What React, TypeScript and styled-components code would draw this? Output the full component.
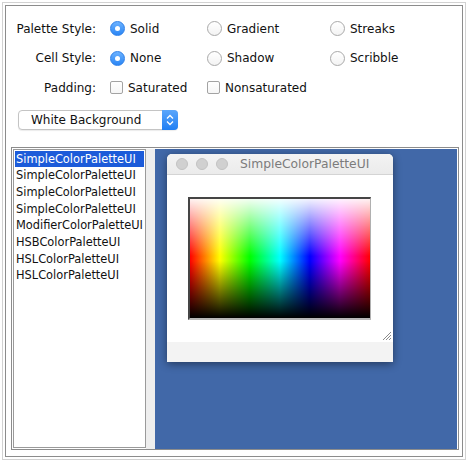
import React from "react";
import styled, { createGlobalStyle } from "styled-components";

const Global = createGlobalStyle`
  html, body { margin: 0; padding: 0; background: #ffffff; }
  body { font-family: "DejaVu Sans", sans-serif; color: #111; }
  * { box-sizing: border-box; }
`;

const Outer = styled.div`
  margin: 2px;
  width: 464px;
  height: 458px;
  border: 1px solid #d2d2d2;
  padding: 2px;
`;

const Inner = styled.div`
  height: 100%;
  border: 1px solid #8c8c8c;
  display: flex;
  flex-direction: column;
  padding: 8px 3px 6px 0;
`;

const Form = styled.div`
  display: grid;
  grid-template-columns: 91px 84px 110px auto;
  grid-auto-rows: 29.5px;
  column-gap: 13px;
  align-items: center;
  font-size: 12px;
`;

const Label = styled.div`
  text-align: right;
  padding-right: 1px;
`;

const Option = styled.label`
  display: flex;
  align-items: center;
  gap: 5px;
  white-space: nowrap;
`;

const Radio = styled.span<{ $on?: boolean }>`
  width: 15px;
  height: 15px;
  border-radius: 50%;
  flex: none;
  display: flex;
  align-items: center;
  justify-content: center;
  border: 1px solid ${(p) => (p.$on ? "#2d7fe8" : "#a9a9a9")};
  background: ${(p) =>
    p.$on
      ? "linear-gradient(#6cb2ff, #2a86f5)"
      : "linear-gradient(#ffffff, #f3f3f3)"};
  &::after {
    content: "";
    display: ${(p) => (p.$on ? "block" : "none")};
    width: 5px;
    height: 5px;
    border-radius: 50%;
    background: #ffffff;
  }
`;

const Check = styled.span`
  width: 13px;
  height: 13px;
  flex: none;
  border: 1px solid #a3a3a3;
  border-radius: 2px;
  background: linear-gradient(#ffffff, #f6f6f6);
`;

const Combo = styled.div`
  margin: 7px 0 0 12px;
  width: 160px;
  height: 20px;
  display: flex;
  border: 1px solid #c4c4c4;
  border-radius: 4px;
  box-shadow: 0 1px 1px rgba(0, 0, 0, 0.08);
  background: #ffffff;
  font-size: 12px;
`;

const ComboText = styled.div`
  flex: 1;
  padding-left: 12px;
  display: flex;
  align-items: center;
`;

const ComboButton = styled.div`
  width: 16px;
  margin: -1px -1px -1px 0;
  border-radius: 0 4px 4px 0;
  background: linear-gradient(#5ba6fb, #1f7ef3);
  display: flex;
  align-items: center;
  justify-content: center;
`;

const Split = styled.div`
  margin: 17px 0 0 5px;
  flex: 1;
  border: 1px solid #8c8c8c;
  padding: 1px 1px 0 1px;
  display: flex;
`;

const List = styled.div`
  width: 133px;
  margin-bottom: 1px;
  border: 1px solid #9a9a9a;
  background: #ffffff;
  padding: 1px;
  font-size: 11.4px;
`;

const Item = styled.div<{ $sel?: boolean }>`
  height: 16.7px;
  line-height: 16.7px;
  padding-left: 1px;
  white-space: nowrap;
  background: ${(p) => (p.$sel ? "#1c5bd9" : "transparent")};
  color: ${(p) => (p.$sel ? "#ffffff" : "#111111")};
`;

const Divider = styled.div`
  width: 9px;
  background: #eeeeee;
`;

const Desktop = styled.div`
  flex: 1;
  position: relative;
  background: #4168a8;
`;

const Window = styled.div`
  position: absolute;
  left: 12px;
  top: 5px;
  width: 226px;
  height: 208px;
  display: flex;
  flex-direction: column;
  background: #ffffff;
  border-radius: 5px 5px 0 0;
  box-shadow: 0 2px 9px rgba(0, 0, 0, 0.45);
  overflow: hidden;
`;

const TitleBar = styled.div`
  height: 21px;
  flex: none;
  display: flex;
  align-items: center;
  padding-left: 9px;
  background: linear-gradient(#f3f3f3, #ebebeb);
  border-bottom: 1px solid #d4d4d4;
`;

const Light = styled.span`
  width: 12px;
  height: 12px;
  border-radius: 50%;
  background: #d0d0d0;
  border: 1px solid #c2c2c2;
  margin-right: 8px;
  flex: none;
`;

const Title = styled.span`
  margin-left: 4px;
  font-size: 12.3px;
  color: #7c7c7c;
  white-space: nowrap;
`;

const Body = styled.div`
  flex: 1;
  position: relative;
  padding: 22px 0 0 21px;
`;

const Palette = styled.div`
  width: 183px;
  height: 123px;
  border-top: 2px solid #454545;
  border-left: 2px solid #454545;
  border-right: 1px solid #b0b0b0;
  border-bottom: 2px solid #b8b8b8;
  background:
    linear-gradient(to bottom, rgba(255,255,255,0.95) 0%, rgba(255,255,255,0) 48%, rgba(0,0,0,0) 52%, rgba(0,0,0,1) 100%),
    linear-gradient(to right, #ff0000 0%, #ffff00 16.6%, #00ff00 33.3%, #00ffff 50%, #0000ff 66.6%, #ff00ff 83.3%, #ff0000 100%);
`;

const Grip = styled.svg`
  position: absolute;
  right: 1px;
  bottom: 1px;
`;

const BottomBar = styled.div`
  height: 20px;
  flex: none;
  background: #f3f3f3;
`;

const items = [
  "SimpleColorPaletteUI",
  "SimpleColorPaletteUI",
  "SimpleColorPaletteUI",
  "SimpleColorPaletteUI",
  "ModifierColorPaletteUI",
  "HSBColorPaletteUI",
  "HSLColorPaletteUI",
  "HSLColorPaletteUI",
];

export default function App() {
  return (
    <>
      <Global />
      <Outer>
        <Inner>
          <Form>
            <Label>Palette Style:</Label>
            <Option><Radio $on />Solid</Option>
            <Option><Radio />Gradient</Option>
            <Option><Radio />Streaks</Option>
            <Label>Cell Style:</Label>
            <Option><Radio $on />None</Option>
            <Option><Radio />Shadow</Option>
            <Option><Radio />Scribble</Option>
            <Label>Padding:</Label>
            <Option><Check />Saturated</Option>
            <Option><Check />Nonsaturated</Option>
            <span />
          </Form>
          <Combo>
            <ComboText>White Background</ComboText>
            <ComboButton>
              <svg width="8" height="12" viewBox="0 0 8 12">
                <path d="M1 4.5 L4 1.5 L7 4.5 M1 7.5 L4 10.5 L7 7.5" stroke="#fff" strokeWidth="1.3" fill="none" />
              </svg>
            </ComboButton>
          </Combo>
          <Split>
            <List>
              {items.map((t, i) => (
                <Item key={i} $sel={i === 0}>{t}</Item>
              ))}
            </List>
            <Divider />
            <Desktop>
              <Window>
                <TitleBar>
                  <Light />
                  <Light />
                  <Light />
                  <Title>SimpleColorPaletteUI</Title>
                </TitleBar>
                <Body>
                  <Palette />
                  <Grip width="11" height="11" viewBox="0 0 11 11">
                    <path d="M10 2 L2 10 M10 5 L5 10 M10 8 L8 10" stroke="#8a8a8a" strokeWidth="1" />
                  </Grip>
                </Body>
                <BottomBar />
              </Window>
            </Desktop>
          </Split>
        </Inner>
      </Outer>
    </>
  );
}
